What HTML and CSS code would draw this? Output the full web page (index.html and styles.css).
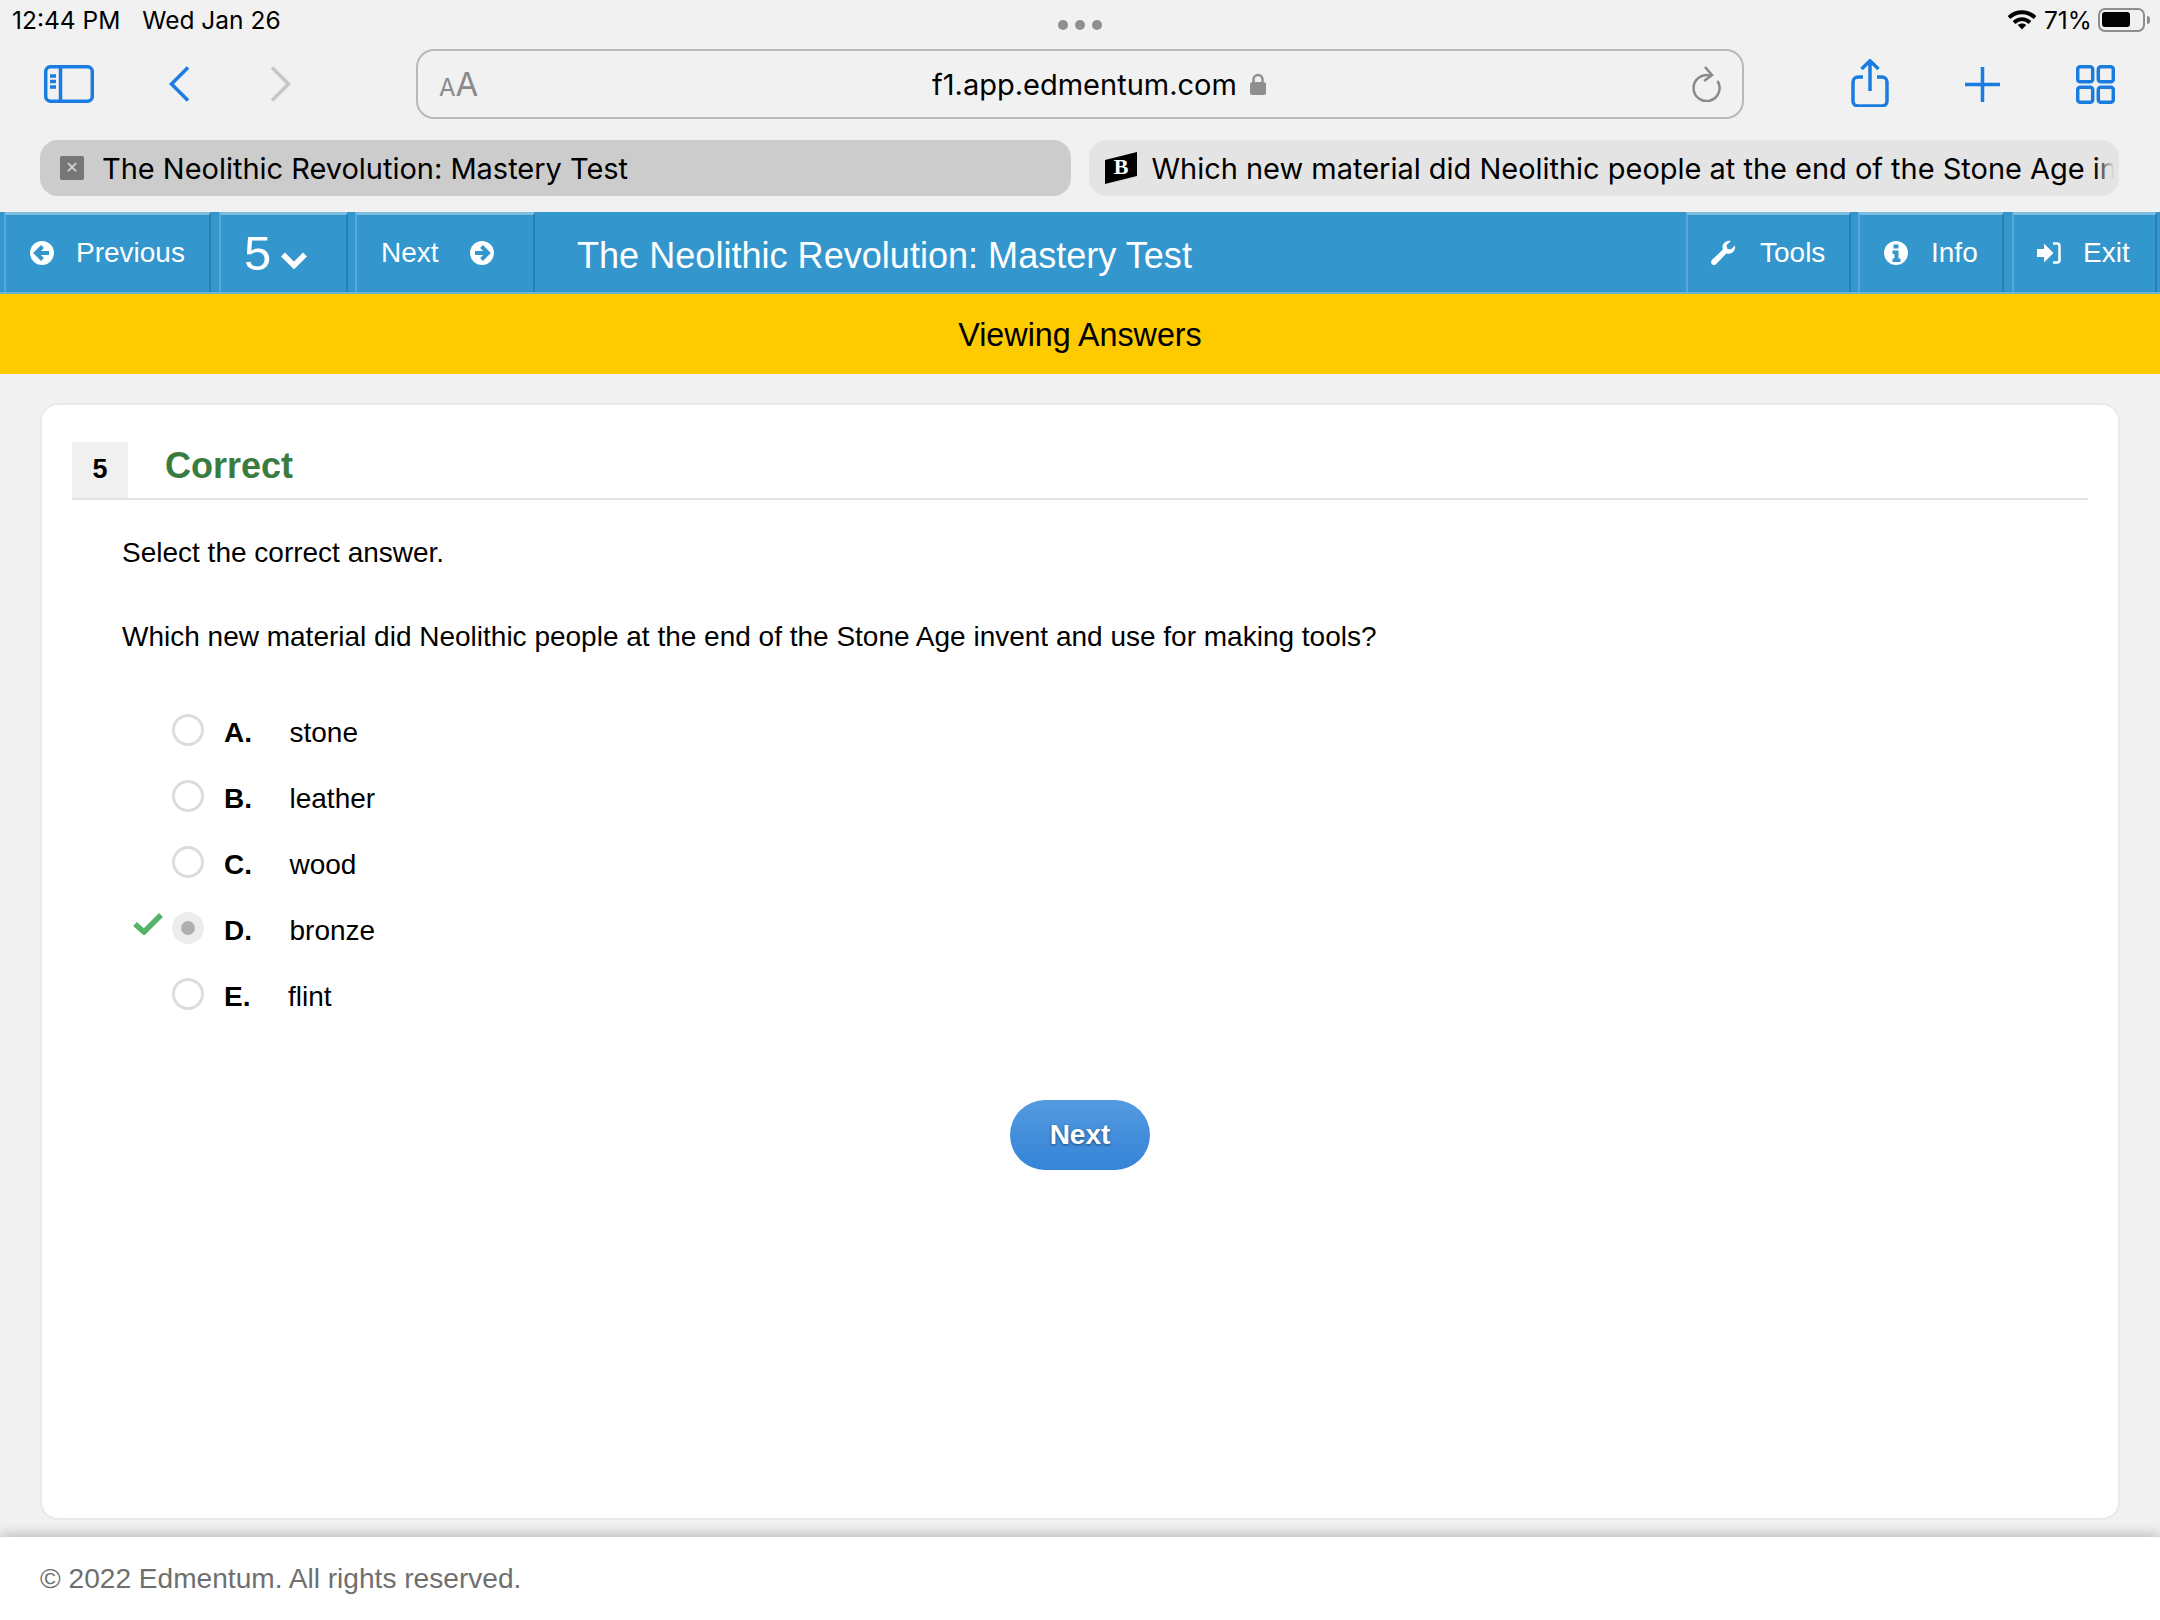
FILE: index.html
```html
<!DOCTYPE html>
<html lang="en">
<head>
<meta charset="utf-8">
<title>The Neolithic Revolution: Mastery Test</title>
<link rel="stylesheet" href="styles.css">
</head>
<body>
<header class="status">
  <div class="status-left"><span>12:44 PM</span><span>Wed Jan 26</span></div>
  <div class="dots"><i></i><i></i><i></i></div>
  <div class="status-right">
    <svg class="wifi" viewBox="0 0 28 20"><path d="M1 7.500C8.500 .5 19.500 .5 27 7.500" /><path d="M6 12.500C11 8 17 8 22 12.500" /><path class="wifi-tip" d="M14 19.500l-4.200-4.500c2.500-2 5.900-2 8.400 0z"/></svg>
    <span class="pct">71%</span>
    <div class="battery"><div class="battery-fill"></div></div>
    <div class="battery-nub"></div>
  </div>
</header>

<div class="toolbar">
  <svg class="ic-side" viewBox="0 0 50 38"><rect x="1.700" y="1.700" width="46.600" height="34.600" rx="5"/><path d="M16.500 2v34M6 11h6M6 16.500h6M6 22h6"/></svg>
  <svg class="ic-back" viewBox="0 0 21 36"><path d="M19 1.500L2.500 18 19 34.500"/></svg>
  <svg class="ic-fwd" viewBox="0 0 21 36"><path d="M2 1.500L18.500 18 2 34.500"/></svg>
  <div class="url">
    <span class="aa"><small>A</small>A</span>
    <span class="addr">f1.app.edmentum.com</span>
    <svg class="lock" viewBox="0 0 16 22"><path class="lock-arc" d="M3.500 11V6.500a4.500 4.500 0 0 1 9 0V11"/><rect y="9" width="16" height="13" rx="2.500"/></svg>
    <svg class="reload" viewBox="0 0 30 36"><path d="M19 9.500A13 13 0 1 0 26.500 15"/><path d="M14 1l7 8-8 6"/></svg>
  </div>
  <svg class="ic-share" viewBox="0 0 38 48"><path d="M12 18H7a5 5 0 0 0-5 5v19a5 5 0 0 0 5 5h24a5 5 0 0 0 5-5V23a5 5 0 0 0-5-5h-5M19 32V2M10.500 10L19 1.800 27.500 10"/></svg>
  <svg class="ic-plus" viewBox="0 0 35 35"><path d="M17.500 0v35M0 17.500h35"/></svg>
  <svg class="ic-grid" viewBox="0 0 39 39"><rect x="1.700" y="1.700" width="15" height="15" rx="2.500"/><rect x="22.300" y="1.700" width="15" height="15" rx="2.500"/><rect x="1.700" y="22.300" width="15" height="15" rx="2.500"/><rect x="22.300" y="22.300" width="15" height="15" rx="2.500"/></svg>
</div>

<div class="tabs">
  <div class="tab tab-active">
    <span class="tab-close">✕</span>
    <span class="tab-text">The Neolithic Revolution: Mastery Test</span>
  </div>
  <div class="tab tab-other">
    <svg class="tab-logo" viewBox="0 0 32 32"><path d="M0 8L32 0v24L0 32z"/><text x="16" y="22" text-anchor="middle">B</text></svg>
    <span class="tab-text">Which new material did Neolithic people at the end of the Stone Age in</span>
  </div>
</div>

<nav class="nav">
  <a class="nav-item w-prev">
    <svg class="nav-ic" viewBox="0 0 24 24"><circle cx="12" cy="12" r="12"/><path class="cut" d="M12.500 5.500L6 12l6.500 6.500M6.500 12H19"/></svg>
    <span>Previous</span>
  </a>
  <a class="nav-item w-num"><span class="num">5</span><svg class="chev" viewBox="0 0 28 18"><path d="M3 3.500l11 11 11-11"/></svg></a>
  <a class="nav-item w-next">
    <span>Next</span>
    <svg class="nav-ic" viewBox="0 0 24 24"><circle cx="12" cy="12" r="12"/><path class="cut" d="M11.500 5.500L18 12l-6.500 6.500M17.500 12H5"/></svg>
  </a>
  <div class="nav-title">The Neolithic Revolution: Mastery Test</div>
  <a class="nav-item w-tools">
    <svg class="nav-ic wrench" viewBox="0 0 26 26"><path d="M25 5.500c.6 3-.6 6-3.300 7.500-1.700.9-3.600 1-5.300.4L6 24.300c-1.100 1.100-3 1.100-4.100 0s-1.100-3 0-4.200L12.800 9.500c-.6-1.800-.5-3.700.5-5.400C14.800 1.500 17.800.2 20.800.9l-4.300 4.300.8 3.500 3.500.9z"/></svg>
    <span>Tools</span>
  </a>
  <a class="nav-item w-info">
    <svg class="nav-ic" viewBox="0 0 24 24"><circle cx="12" cy="12" r="12"/><path class="cut-fill" d="M9.500 3.500h5v4h-5zM8.500 9.500h6v8h2v3.500h-8v-3.500h2v-4.500h-2z"/></svg>
    <span>Info</span>
  </a>
  <a class="nav-item w-exit">
    <svg class="nav-ic exit-ic" viewBox="0 0 24 24"><path d="M0 8h7V2.500l9.500 9.500L7 21.500V16H0z"/><path class="bracket" d="M16 2.500h4a2.500 2.500 0 0 1 2.500 2.500v14a2.500 2.500 0 0 1-2.500 2.500h-4"/></svg>
    <span>Exit</span>
  </a>
</nav>

<div class="banner">Viewing Answers</div>

<main class="main">
  <section class="card">
    <div class="q-head">
      <div class="q-num">5</div>
      <h1 class="q-status">Correct</h1>
    </div>
    <div class="q-body">
      <p class="q-lead">Select the correct answer.</p>
      <p class="q-text">Which new material did Neolithic people at the end of the Stone Age invent and use for making tools?</p>
      <ul class="opts">
        <li class="opt"><span class="check"></span><span class="radio"></span><b>A.</b><span>stone</span></li>
        <li class="opt"><span class="check"></span><span class="radio"></span><b>B.</b><span>leather</span></li>
        <li class="opt"><span class="check"></span><span class="radio"></span><b>C.</b><span>wood</span></li>
        <li class="opt"><span class="check"><svg viewBox="0 0 30 22"><path d="M2 11l9 8L28 2"/></svg></span><span class="radio radio-on"></span><b>D.</b><span>bronze</span></li>
        <li class="opt"><span class="check"></span><span class="radio"></span><b>E.</b><span class="flint">flint</span></li>
      </ul>
    </div>
    <button class="next-btn">Next</button>
  </section>
</main>

<footer class="footer">© 2022 Edmentum. All rights reserved.</footer>
</body>
</html>
```
FILE: styles.css
```css
* { box-sizing: border-box; }
html, body { margin: 0; padding: 0; }
body {
  width: 2160px;
  height: 1620px;
  overflow: hidden;
  display: flex;
  flex-direction: column;
  background: #f1f1f1;
  color: #000;
  font-family: "Liberation Sans", Arial, sans-serif;
}
svg { display: block; flex: none; }

/* status bar */
.status {
  height: 49px;
  display: grid;
  grid-template-columns: 1fr auto 1fr;
  align-items: start;
  font-family: Inter, "Noto Sans", sans-serif;
  font-size: 24.500px;
}
.status-left { display: flex; gap: 22px; padding: 5px 0 0 12px; line-height: 30px; }
.dots { display: flex; gap: 7px; padding-top: 20px; }
.dots i { width: 10px; height: 10px; border-radius: 50%; background: #8f8f8f; }
.status-right { display: flex; justify-content: flex-end; align-items: flex-start; padding: 5px 10px 0 0; line-height: 30px; }
.wifi { width: 28px; height: 20px; margin: 5px 8px 0 0; fill: none; stroke: #000; stroke-width: 4; }
.wifi .wifi-tip { fill: #000; stroke: none; }
.pct { width: 47px; margin-right: 7px; white-space: nowrap; }
.battery { width: 47px; height: 24px; margin-top: 3px; border: 2.500px solid #8e8e8e; border-radius: 7px; padding: 2px; }
.battery-fill { width: 28px; height: 15px; background: #000; border-radius: 3px; }
.battery-nub { width: 3px; height: 8px; margin: 11px 0 0 2px; background: #8e8e8e; border-radius: 0 3px 3px 0; }

/* toolbar */
.toolbar { height: 70px; display: flex; align-items: flex-start; padding-left: 44px; }
.toolbar svg { fill: none; stroke: #1a7ce0; stroke-width: 3.500; }
.ic-side { width: 50px; height: 38px; margin-top: 16px; }
.ic-back { width: 21px; height: 36px; margin: 17px 0 0 75px; }
.ic-fwd { width: 21px; height: 36px; margin: 17px 0 0 80px; }
.toolbar .ic-fwd { stroke: #c6c6c6; }
.url {
  width: 1328px;
  height: 70px;
  margin-left: 125px;
  border: 2.500px solid #b8b8b8;
  border-radius: 18px;
  display: flex;
  align-items: center;
  padding-left: 21px;
  font-family: Inter, "Noto Sans", sans-serif;
}
.aa { width: 38px; font-size: 33px; color: #8a8a8a; white-space: nowrap; line-height: 1; }
.aa small { font-size: 24px; }
.addr { margin-left: 455px; font-size: 29px; white-space: nowrap; }
.toolbar .lock { width: 16px; height: 22px; margin-left: 13px; fill: #8e8e8e; stroke: none; }
.toolbar .lock .lock-arc { fill: none; stroke: #8e8e8e; stroke-width: 2.500; }
.toolbar .reload { width: 30px; height: 36px; margin-left: auto; margin-right: 21px; stroke: #8a8a8a; stroke-width: 2.500; }
.ic-share { width: 38px; height: 48px; margin: 10px 0 0 107px; }
.ic-plus { width: 35px; height: 35px; margin: 18px 0 0 76px; }
.ic-grid { width: 39px; height: 39px; margin: 16px 0 0 76px; }

/* tabs */
.tabs { display: flex; gap: 18px; height: 56px; margin: 21px 41px 0 40px; font-family: Inter, "Noto Sans", sans-serif; font-size: 29px; }
.tab { flex: 0 0 calc(50% - 9px); min-width: 0; display: flex; align-items: center; border-radius: 18px; overflow: hidden; white-space: nowrap; position: relative; }
.tab-active { background: #cccccc; padding-left: 20px; }
.tab-other { background: #e4e4e4; padding-left: 16px; }
.tab-other::after { content: ""; position: absolute; top: 0; right: 0; width: 24px; height: 100%; background: linear-gradient(to right, rgba(228,228,228,0), #e4e4e4 80%); }
.tab-close { width: 24px; height: 24px; margin-right: 18px; background: #767676; color: #d8d8d8; border-radius: 2px; font-size: 16px; line-height: 24px; text-align: center; flex: none; font-family: "DejaVu Sans", sans-serif; }
.tab-logo { width: 32px; height: 32px; margin-right: 15px; fill: #000; }
.tab-logo text { fill: #fff; font-family: "Liberation Serif", serif; font-weight: 700; font-size: 22px; }
.tab-text { line-height: 59px; letter-spacing: -.02px; }

/* nav */
.nav { height: 82px; margin-top: 16px; display: flex; background: #3396cd; border-bottom: 2px solid #6bb3d9; padding-left: 4px; color: #fff; font-size: 28px; flex: none; }
.nav-item { display: flex; align-items: center; height: 80px; border-top: 3px solid #7cbde0; border-left: 2px solid #57a9d9; border-right: 2px solid #2a7fb0; padding-bottom: 2px; flex: none; }
.nav-ic { width: 24px; height: 24px; fill: #fff; }
.nav-ic .cut { fill: none; stroke: #3396cd; stroke-width: 4; }
.nav-ic .cut-fill { fill: #3396cd; }
.wrench { width: 26px; height: 26px; }
.exit-ic .bracket { fill: none; stroke: #fff; stroke-width: 2.500; }
.w-prev { width: 207px; margin-right: 8px; padding-left: 24px; gap: 22px; }
.w-num { width: 129px; margin-right: 7px; padding-left: 23px; }
.num { font-size: 49px; width: 36px; }
.chev { width: 28px; height: 18px; margin-top: 14px; fill: none; stroke: #fff; stroke-width: 5.500; }
.w-next { width: 180px; padding-left: 24px; gap: 31px; }
.nav-title { flex: 1; padding-left: 42px; font-size: 36.100px; line-height: 88px; white-space: nowrap; }
.w-tools { width: 165px; margin-right: 7px; padding-left: 22px; gap: 24px; }
.w-info { width: 146px; margin-right: 8px; padding-left: 24px; gap: 23px; }
.w-exit { width: 145px; margin-right: 3px; padding-left: 23px; gap: 22px; }

/* banner */
.banner { height: 80px; background: #fdcb00; text-align: center; font-size: 32.300px; line-height: 82px; flex: none; }

/* main */
.main { flex: 1; min-height: 0; display: flex; padding: 29px 40px 17px 40px; }
.card { flex: 1; background: #fff; border: 2px solid #e9e9e9; border-radius: 18px; padding: 37px 30px 0 30px; }
.q-head { display: flex; height: 58px; border-bottom: 2px solid #e3e3e3; }
.q-num { width: 56px; height: 56px; background: #f0f0f0; font-weight: 700; font-size: 27px; line-height: 54px; text-align: center; }
.q-status { margin: 0 0 0 37px; font-size: 36px; line-height: 48px; font-weight: 700; color: #3a7c3f; }
.q-body { padding: 36px 0 0 50px; font-size: 28px; line-height: 34px; }
.q-lead { margin: 0; }
.q-text { margin: 50px 0 0; }
.opts { list-style: none; margin: 43px 0 0; padding: 0 0 0 11px; font-size: 28px; }
.opt { height: 66px; display: flex; align-items: center; }
.opt b { width: 65.500px; padding-top: 5px; }
.opt span:last-child { padding-top: 5px; }
.opt .flint { margin-left: -1.500px; }
.check { width: 30px; height: 22px; margin: -8px 9px 0 0; }
.check svg { width: 30px; height: 22px; fill: none; stroke: #55b468; stroke-width: 5.500; }
.radio { width: 32px; height: 32px; margin-right: 20px; border: 3px solid #dcdcdc; border-radius: 50%; flex: none; }
.radio-on { background: #ececec; border-color: #ececec; display: flex; align-items: center; justify-content: center; }
.radio-on::after { content: ""; width: 14px; height: 14px; border-radius: 50%; background: #b0b0b0; }
.next-btn { display: block; width: 140px; height: 70px; margin: 73px auto 0; border: 0; border-radius: 35px; background: linear-gradient(#539ae0, #3584d8); color: #fff; font: 700 28px "Liberation Sans", Arial, sans-serif; text-shadow: 0 1px 3px rgba(0,0,0,.5); padding: 0; }

/* footer */
.footer { height: 83px; flex: none; background: #fff; color: #6f6f6f; font-size: 28.100px; line-height: 84px; padding-left: 40px; box-shadow: 0 -3px 12px rgba(0,0,0,.22); }
```
